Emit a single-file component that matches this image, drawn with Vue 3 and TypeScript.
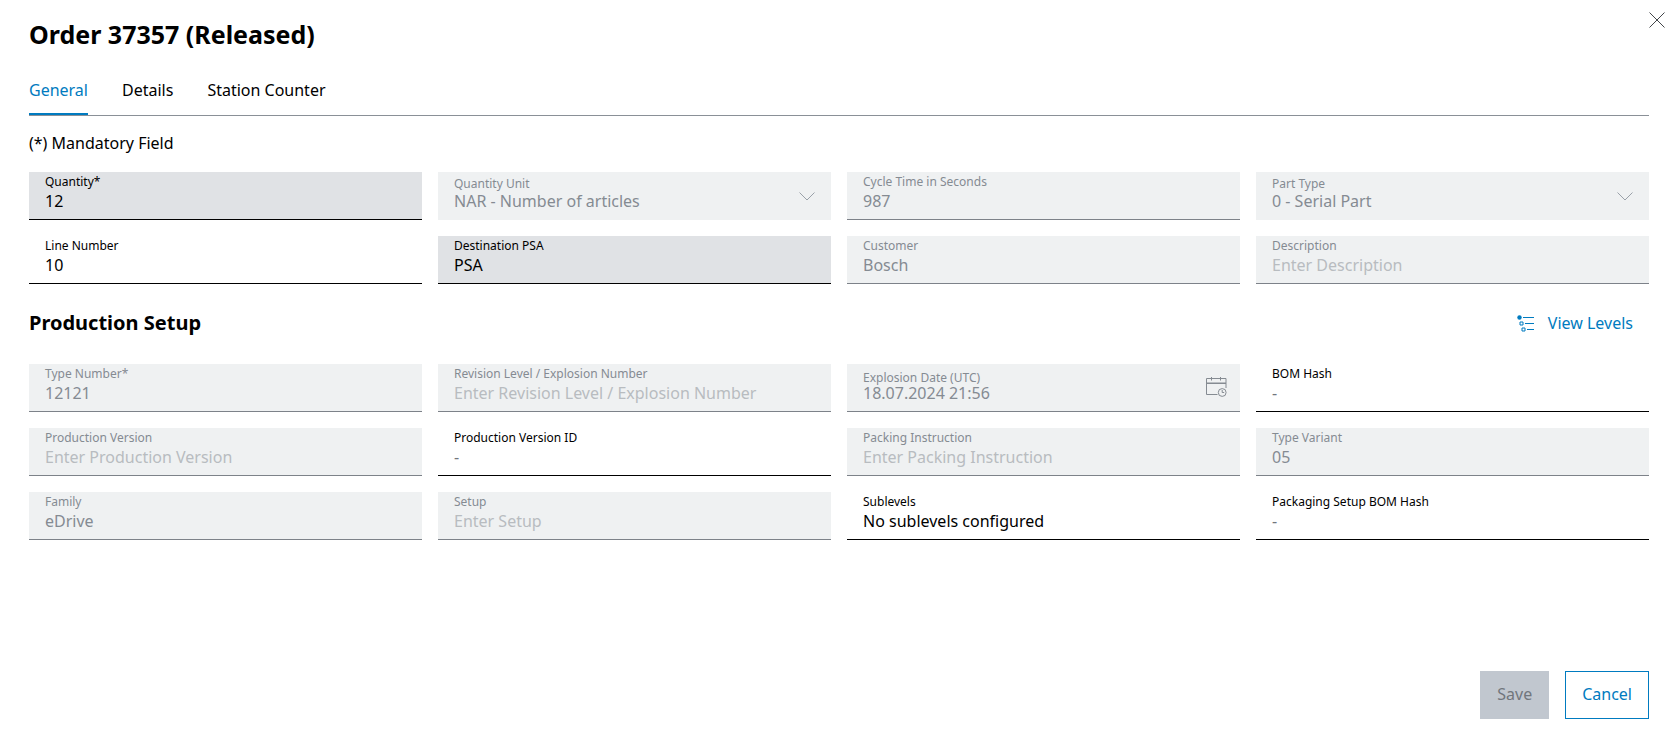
<script setup lang="ts">
import { ref } from 'vue'

interface Field {
  id: string
  label: string
  value?: string
  placeholder?: string
  kind: 'text' | 'select' | 'date'
  state: 'active' | 'readonly' | 'disabled'
}

const tabs = ['General', 'Details', 'Station Counter']
const activeTab = ref('General')

const orderFields = ref<Field[]>([
  { id: 'quantity', label: 'Quantity*', value: '12', kind: 'text', state: 'active' },
  { id: 'unit', label: 'Quantity Unit', value: 'NAR - Number of articles', kind: 'select', state: 'disabled' },
  { id: 'cycle', label: 'Cycle Time in Seconds', value: '987', kind: 'text', state: 'disabled' },
  { id: 'part-type', label: 'Part Type', value: '0 - Serial Part', kind: 'select', state: 'disabled' },
  { id: 'line', label: 'Line Number', value: '10', kind: 'text', state: 'readonly' },
  { id: 'psa', label: 'Destination PSA', value: 'PSA', kind: 'text', state: 'active' },
  { id: 'customer', label: 'Customer', value: 'Bosch', kind: 'text', state: 'disabled' },
  { id: 'description', label: 'Description', placeholder: 'Enter Description', kind: 'text', state: 'disabled' },
])

const setupFields = ref<Field[]>([
  { id: 'type-number', label: 'Type Number*', value: '12121', kind: 'text', state: 'disabled' },
  { id: 'revision', label: 'Revision Level / Explosion Number', placeholder: 'Enter Revision Level / Explosion Number', kind: 'text', state: 'disabled' },
  { id: 'explosion-date', label: 'Explosion Date (UTC)', value: '18.07.2024 21:56', kind: 'date', state: 'disabled' },
  { id: 'bom-hash', label: 'BOM Hash', placeholder: '-', kind: 'text', state: 'readonly' },
  { id: 'version', label: 'Production Version', placeholder: 'Enter Production Version', kind: 'text', state: 'disabled' },
  { id: 'version-id', label: 'Production Version ID', placeholder: '-', kind: 'text', state: 'readonly' },
  { id: 'packing', label: 'Packing Instruction', placeholder: 'Enter Packing Instruction', kind: 'text', state: 'disabled' },
  { id: 'variant', label: 'Type Variant', value: '05', kind: 'text', state: 'disabled' },
  { id: 'family', label: 'Family', value: 'eDrive', kind: 'text', state: 'disabled' },
  { id: 'setup', label: 'Setup', placeholder: 'Enter Setup', kind: 'text', state: 'disabled' },
  { id: 'sublevels', label: 'Sublevels', value: 'No sublevels configured', kind: 'text', state: 'readonly' },
  { id: 'packaging-hash', label: 'Packaging Setup BOM Hash', placeholder: '-', kind: 'text', state: 'readonly' },
])

const groups = [
  { id: 'order', title: '', fields: orderFields },
  { id: 'production', title: 'Production Setup', fields: setupFields },
]
</script>

<template>
  <main class="dialog">
    <button class="close" type="button" aria-label="Close">
      <svg width="16" height="16" viewBox="0 0 16 16"><path d="M.5.5l15 15M15.500.5l-15 15" /></svg>
    </button>

    <h1>Order 37357 (Released)</h1>

    <nav class="tabs" role="tablist">
      <button
        v-for="tab in tabs"
        :key="tab"
        type="button"
        role="tab"
        class="tab"
        :class="{ current: tab === activeTab }"
        :aria-selected="tab === activeTab"
        @click="activeTab = tab"
      >{{ tab }}</button>
    </nav>

    <p class="hint">(*) Mandatory Field</p>

    <section v-for="group in groups" :key="group.id">
      <header v-if="group.title" class="section-head">
        <h2>{{ group.title }}</h2>
        <button type="button" class="link-button">
          <svg width="17" height="18" viewBox="0 0 17 18">
            <circle cx="2.500" cy="3.500" r="2.200" class="fill" />
            <path d="M6 3.500h11M8 9.500h9M10 15.500h7" />
            <path d="M3 8h3v3H3zM5 14h3v3H5z" />
          </svg>
          <span>View Levels</span>
        </button>
      </header>
      <div class="grid">
        <div
          v-for="field in group.fields.value"
          :key="field.id"
          class="field"
          :class="[field.kind, field.state]"
        >
          <label :for="field.id">{{ field.label }}</label>
          <select v-if="field.kind === 'select'" :id="field.id" disabled>
            <option>{{ field.value }}</option>
          </select>
          <input
            v-else
            :id="field.id"
            v-model="field.value"
            type="text"
            :placeholder="field.placeholder"
            :disabled="field.state === 'disabled'"
            :readonly="field.state === 'readonly'"
          />
          <svg v-if="field.kind === 'select'" class="chevron" width="16" height="9" viewBox="0 0 16 9">
            <path d="M.5.5L8 8 15.500.5" />
          </svg>
          <svg v-if="field.kind === 'date'" class="calendar" width="21" height="20" viewBox="0 0 21 20">
            <path d="M11.500 17.500H.5V1.500h19.500V11M.5 6.500H20M5.500 0v3.500M14.500 0v3.500" />
            <path d="M.5 5.500H20" class="soft" />
            <circle cx="16.200" cy="15.500" r="3.900" />
            <path d="M16.200 13v2.500h2" />
          </svg>
        </div>
      </div>
    </section>

    <footer>
      <button type="button" class="button save" disabled>Save</button>
      <button type="button" class="button cancel">Cancel</button>
    </footer>
  </main>
</template>

<style>
body {
  margin: 0;
  background: #fff;
}
</style>

<style scoped>
.dialog {
  position: relative;
  box-sizing: border-box;
  min-height: 100vh;
  display: flex;
  flex-direction: column;
  padding: 14px 28px 29px 29px;
  color: #000;
  font: 16px/24px "Noto Sans", "Open Sans", sans-serif;
}

button,
input,
select {
  font: inherit;
  color: inherit;
  border: 0;
  border-radius: 0;
  background: none;
  padding: 0;
  margin: 0;
}

svg {
  display: block;
  fill: none;
  stroke: currentColor;
}

.close {
  position: absolute;
  top: 4px;
  right: 4px;
  padding: 8px;
  color: #43464a;
}

h1 {
  margin: 0;
  font-size: 25px;
  line-height: 40px;
}

.tabs {
  display: flex;
  gap: 34px;
  margin-top: 12px;
  border-bottom: 1px solid #8a9097;
}

.tab {
  padding: 12px 0 11px;
  border-bottom: 2px solid transparent;
}

.tab.current {
  color: #007bc0;
  border-bottom-color: #007bc0;
}

.hint {
  margin: 15px 0 17px;
}

.grid {
  display: grid;
  grid-template-columns: repeat(4, minmax(0, 1fr));
  gap: 16px;
}

.field {
  box-sizing: border-box;
  height: 48px;
  display: grid;
  grid-template-columns: minmax(0, 1fr) auto;
  align-content: start;
  padding: 2px 16px 0;
  border-bottom: 1px solid #000;
}

.field label {
  font-size: 12px;
  line-height: 16px;
}

.field input,
.field select {
  grid-column: 1;
  width: 100%;
  height: 22px;
  line-height: 22px;
  appearance: none;
  outline: none;
  opacity: 1;
}

.field svg {
  grid-column: 2;
  grid-row: 1 / 3;
  align-self: center;
}

.field.active {
  background: #e0e2e5;
}

.field.disabled {
  color: #858b92;
  background: #eff1f2;
  border-bottom-color: #7d8289;
}

.field input::placeholder {
  color: #b8bcc0;
  opacity: 1;
}

.field.readonly input::placeholder {
  color: #71767c;
}

.field.select {
  padding-top: 5px;
  border-bottom: 0;
}

.field.select label {
  line-height: 14px;
}

.field.select select {
  height: 20px;
  line-height: 20px;
}

.field.date {
  padding: 8px 13px 0 16px;
}

.field.date label {
  line-height: 12px;
}

.field.date input {
  height: 18px;
  line-height: 18px;
}

.field .chevron {
  margin-top: 4px;
  color: #9aa1a9;
}

.soft {
  stroke-opacity: 0.5;
}

.section-head {
  display: flex;
  align-items: center;
  justify-content: space-between;
  padding: 15px 16px 17px 0;
}

h2 {
  margin: 0;
  font-size: 20px;
  line-height: 32px;
}

.link-button {
  display: flex;
  align-items: center;
  gap: 14px;
  height: 48px;
  color: #007bc0;
}

.fill {
  fill: currentColor;
  stroke: none;
}

footer {
  display: flex;
  justify-content: flex-end;
  gap: 16px;
  margin-top: auto;
}

.button {
  box-sizing: border-box;
  height: 48px;
  padding: 0 17px 2px;
}

.save {
  background: #c1c7cf;
  color: #71767c;
}

.cancel {
  padding: 0 16px 2px;
  border: 1px solid #007bc0;
  color: #007bc0;
}
</style>
